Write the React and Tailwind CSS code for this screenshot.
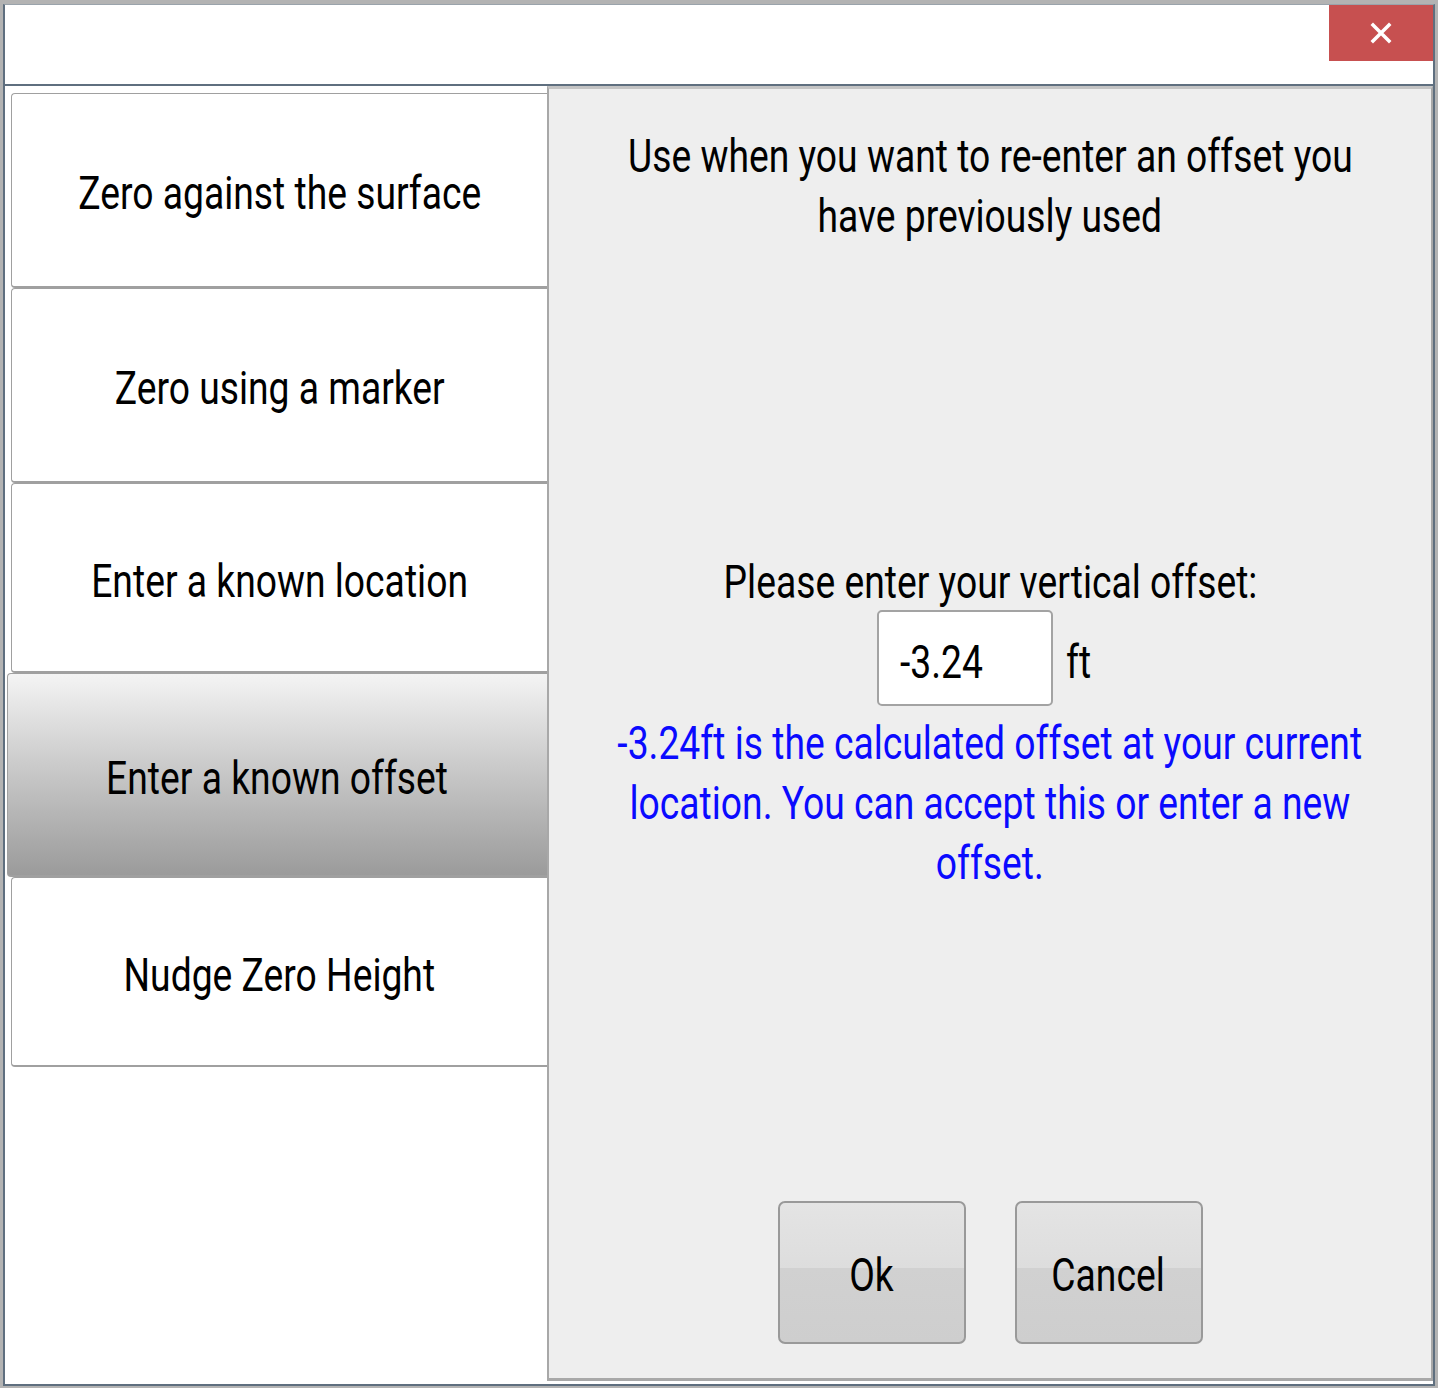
import React from 'react';

function T({ children, className = '' }) {
  return (
    <span className={'inline-block whitespace-nowrap scale-x-[0.81] ' + className}>
      {children}
    </span>
  );
}

function Line({ children, className = '' }) {
  return (
    <div className={'flex justify-center text-[46px] leading-[60px] ' + className}>
      <T>{children}</T>
    </div>
  );
}

const options = [
  { label: 'Zero against the surface', h: 'h-[195px]' },
  { label: 'Zero using a marker', h: 'h-[195px]' },
  { label: 'Enter a known location', h: 'h-[190px]' },
  { label: 'Enter a known offset', h: 'h-[204px]', active: true },
  { label: 'Nudge Zero Height', h: 'h-[190px]' },
];

export default function App() {
  return (
    <div className="w-[1438px] h-[1388px] bg-[#b3b3b3] pt-[4px] pl-[3px] font-['Roboto','Liberation_Sans',sans-serif] text-black">
      <div className="flex flex-col w-[1432px] h-[1382px] bg-white border-x-2 border-b-2 border-t border-[#5f6f7f] border-t-[#9aa3ab]">
        {/* Title bar */}
        <div className="flex justify-end items-start h-[81px] border-b-2 border-[#5f6f7f] shrink-0">
          <button className="w-[104px] h-[56px] bg-[#c75050] flex items-center justify-center">
            <svg width="22" height="22" viewBox="0 0 22 22">
              <path d="M3 3 L19 19 M19 3 L3 19" stroke="white" strokeWidth="3.5" strokeLinecap="square" />
            </svg>
          </button>
        </div>

        <div className="flex flex-1 min-h-0">
          {/* Left options */}
          <div className="w-[542px] shrink-0 bg-white pt-[7px] flex flex-col">
            {options.map((o) =>
              o.active ? (
                <div
                  key={o.label}
                  className={`${o.h} ml-[2px] pt-[6px] flex items-center justify-center rounded-l-[4px] border border-r-0 border-b-2 border-[#a0a0a0] bg-linear-to-b from-[#f4f4f4] to-[#9b9b9b] text-[46px] leading-[60px]`}
                >
                  <T>{o.label}</T>
                </div>
              ) : (
                <div
                  key={o.label}
                  className={`${o.h} ml-[6px] pt-[6px] flex items-center justify-center rounded-l-[4px] border border-r-0 border-b-2 border-[#a0a0a0] bg-white text-[46px] leading-[60px]`}
                >
                  <T>{o.label}</T>
                </div>
              )
            )}
          </div>

          {/* Right panel */}
          <div className="flex flex-1 min-w-0 flex-col bg-[#eeeeee] border-l-2 border-r-2 border-b-[3px] border-t-[3px] border-[#a8a8a8] border-t-[#c4c4c4] mb-[3px]">
            <div className="pt-[37px]">
              <Line>Use when you want to re-enter an offset you</Line>
              <Line>have previously used</Line>
            </div>

            <Line className="mt-[306px]">Please enter your vertical offset:</Line>

            <div className="flex justify-center items-center -mt-[2px]">
              <div className="w-[176px] h-[96px] bg-white border-2 border-[#a3a3a3] rounded-[5px] flex items-center pl-[21px] pt-[8px] text-[46px] leading-[60px]">
                <T className="origin-left">-3.24</T>
              </div>
              <div className="w-[38px] ml-[13px] pt-[8px] text-[46px] leading-[60px]">
                <T className="origin-left">ft</T>
              </div>
            </div>

            <div className="mt-[7px] text-[#0a0aff]">
              <Line>-3.24ft is the calculated offset at your current</Line>
              <Line>location. You can accept this or enter a new</Line>
              <Line>offset.</Line>
            </div>

            <div className="mt-auto mb-[34px] flex justify-center gap-[49px]">
              {['Ok', 'Cancel'].map((b) => (
                <button
                  key={b}
                  className="w-[188px] h-[143px] rounded-[7px] border-2 border-[#999999] bg-[linear-gradient(#e4e4e4_0%,#dddddd_47%,#d1d1d1_47%,#cecece_100%)] flex items-center justify-center pt-[4px] text-[46px] leading-[60px]"
                >
                  <T>{b}</T>
                </button>
              ))}
            </div>
          </div>
        </div>
      </div>
    </div>
  );
}
